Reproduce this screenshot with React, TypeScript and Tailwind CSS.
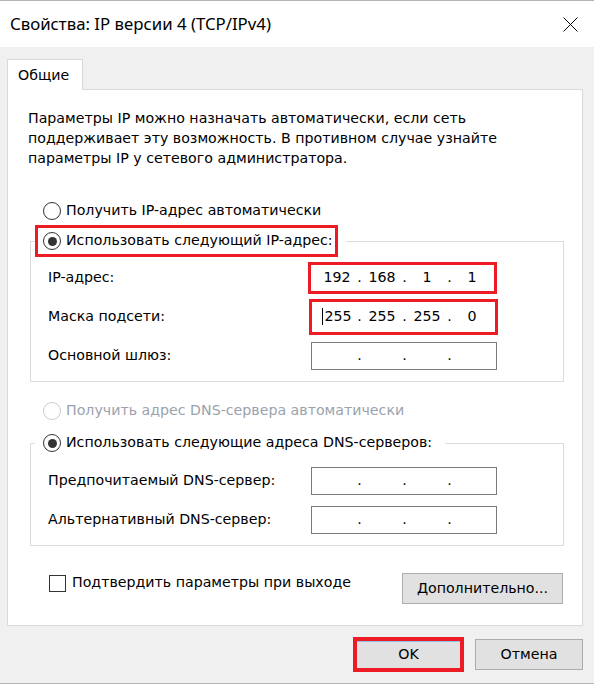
import React from "react";

const RED = "border-[#ed1c24]";

function Radio({ checked = false, disabled = false }: { checked?: boolean; disabled?: boolean }) {
  return (
    <span
      className={`flex h-[18px] w-[18px] shrink-0 items-center justify-center rounded-full border bg-white ${
        disabled ? "border-[#cccccc]" : "border-[#333333]"
      }`}
    >
      {checked ? <span className="h-[9px] w-[9px] rounded-full bg-[#333333]" /> : null}
    </span>
  );
}

function IpBox({
  parts,
  highlight = false,
  caret = false,
  width = 186,
  height = 28,
  pad = 7,
}: {
  parts: string[];
  highlight?: boolean;
  caret?: boolean;
  width?: number;
  height?: number;
  pad?: number;
}) {
  return (
    <div
      className={`flex items-center bg-white ${highlight ? `border-[3px] ${RED}` : "border border-[#7a7a7a]"}`}
      style={{ width, height, paddingLeft: pad }}
    >
      {parts.map((p, i) => (
        <React.Fragment key={i}>
          {i > 0 ? <span className="w-[9px] text-center">.</span> : null}
          <span className="flex w-[36px] items-center justify-center">
            {caret && i === 0 ? <span className="mr-[1px] h-[17px] w-px bg-black" /> : null}
            {p}
          </span>
        </React.Fragment>
      ))}
    </div>
  );
}

function Row({
  label,
  labelW = 263,
  h,
  children,
}: {
  label: string;
  labelW?: number;
  h: number;
  children: React.ReactNode;
}) {
  return (
    <div className="flex items-center" style={{ height: h }}>
      <span className="shrink-0" style={{ width: labelW }}>
        {label}
      </span>
      {children}
    </div>
  );
}

export default function App() {
  return (
    <div className="flex h-[684px] w-[594px] flex-col border-y border-[#b4b4b4] bg-[#f0f0f0] font-['DejaVu_Sans',sans-serif] text-[14.2px] text-black">
      {/* title bar */}
      <div className="flex h-[46px] shrink-0 items-center justify-between bg-white pl-[10px] pr-[16px]">
        <span className="font-['Noto_Sans',sans-serif] text-[16.8px]">Свойства: IP версии 4 (TCP/IPv4)</span>
        <svg width="15" height="15" viewBox="0 0 15 15" className="text-black">
          <path d="M0.5 0.5 L14.5 14.5 M14.5 0.5 L0.5 14.5" stroke="currentColor" strokeWidth="1" fill="none" />
        </svg>
      </div>

      <div className="flex flex-1 flex-col pl-[7px] pr-[11px] pt-[12px]">
        {/* tab */}
        <div className="relative z-10 -mb-px flex h-[31px] w-[76px] items-center border border-b-0 border-[#d9d9d9] bg-white pl-[10px] leading-none">
          Общие
        </div>

        {/* panel */}
        <div className="flex h-[537px] w-full flex-col border border-[#d9d9d9] bg-white pl-[20px] pt-[18px]">
          <p className="leading-[20px]">
            Параметры IP можно назначать автоматически, если сеть
            <br />
            поддерживает эту возможность. В противном случае узнайте
            <br />
            параметры IP у сетевого администратора.
          </p>

          <div className="mt-[33px] flex h-[20px] items-center gap-[5px] pl-[15px]">
            <Radio />
            <span>Получить IP-адрес автоматически</span>
          </div>

          <fieldset className="ml-[2px] mt-[4px] w-[534px] border border-[#dcdcdc]">
            <legend className="ml-[4px] pr-[8px]">
              <div className={`flex h-[32px] items-center gap-[5px] border-[3px] ${RED} pl-[5px] pr-[2px]`}>
                <Radio checked />
                <span>Использовать следующий IP-адрес:</span>
              </div>
            </legend>
            <div className="mt-px pb-[6px] pl-[17px]">
              <Row label="IP-адрес:" labelW={260} h={39}>
                <IpBox parts={["192", "168", "1", "1"]} highlight width={189} height={32} pad={8} />
              </Row>
              <Row label="Маска подсети:" labelW={261} h={40}>
                <IpBox parts={["255", "255", "255", "0"]} highlight caret width={189} height={36} pad={7} />
              </Row>
              <Row label="Основной шлюз:" h={38}>
                <IpBox parts={["", "", "", ""]} />
              </Row>
            </div>
          </fieldset>

          <div className="mt-[19px] flex h-[20px] items-center gap-[5px] pl-[15px] text-[#9aa3ad]">
            <Radio disabled />
            <span>Получить адрес DNS-сервера автоматически</span>
          </div>

          <fieldset className="ml-[2px] mt-[6px] w-[534px] border border-[#dcdcdc]">
            <legend className="ml-[4px] pr-[8px]">
              <div className="flex h-[32px] items-center gap-[5px] border-[3px] border-transparent pl-[5px] pr-[2px]">
                <Radio checked />
                <span>Использовать следующие адреса DNS-серверов:</span>
              </div>
            </legend>
            <div className="mt-[2px] pb-[6px] pl-[17px]">
              <Row label="Предпочитаемый DNS-сервер:" h={40}>
                <IpBox parts={["", "", "", ""]} />
              </Row>
              <Row label="Альтернативный DNS-сервер:" h={38}>
                <IpBox parts={["", "", "", ""]} />
              </Row>
            </div>
          </fieldset>

          <div className="mt-[27px] flex w-[535px] items-start justify-between pl-[21px]">
            <label className="mt-px flex h-[18px] items-center gap-[6px]">
              <span className="h-[17px] w-[17px] border border-[#333333] bg-white" />
              <span>Подтвердить параметры при выходе</span>
            </label>
            <button className="flex h-[31px] w-[161px] items-center justify-center border border-[#adadad] bg-[#e1e1e1]">
              Дополнительно...
            </button>
          </div>
        </div>

        {/* footer buttons */}
        <div className="mt-[11px] flex items-center justify-end gap-[11px]">
          <div className={`h-[35px] w-[111px] border-[4px] ${RED} bg-[#e1e1e1]`}>
            <div className="flex h-full items-center justify-center border-t border-[#8fc1ea]">OK</div>
          </div>
          <button className="flex h-[31px] w-[108px] items-center justify-center border border-[#adadad] bg-[#e1e1e1]">
            Отмена
          </button>
        </div>
      </div>
    </div>
  );
}
